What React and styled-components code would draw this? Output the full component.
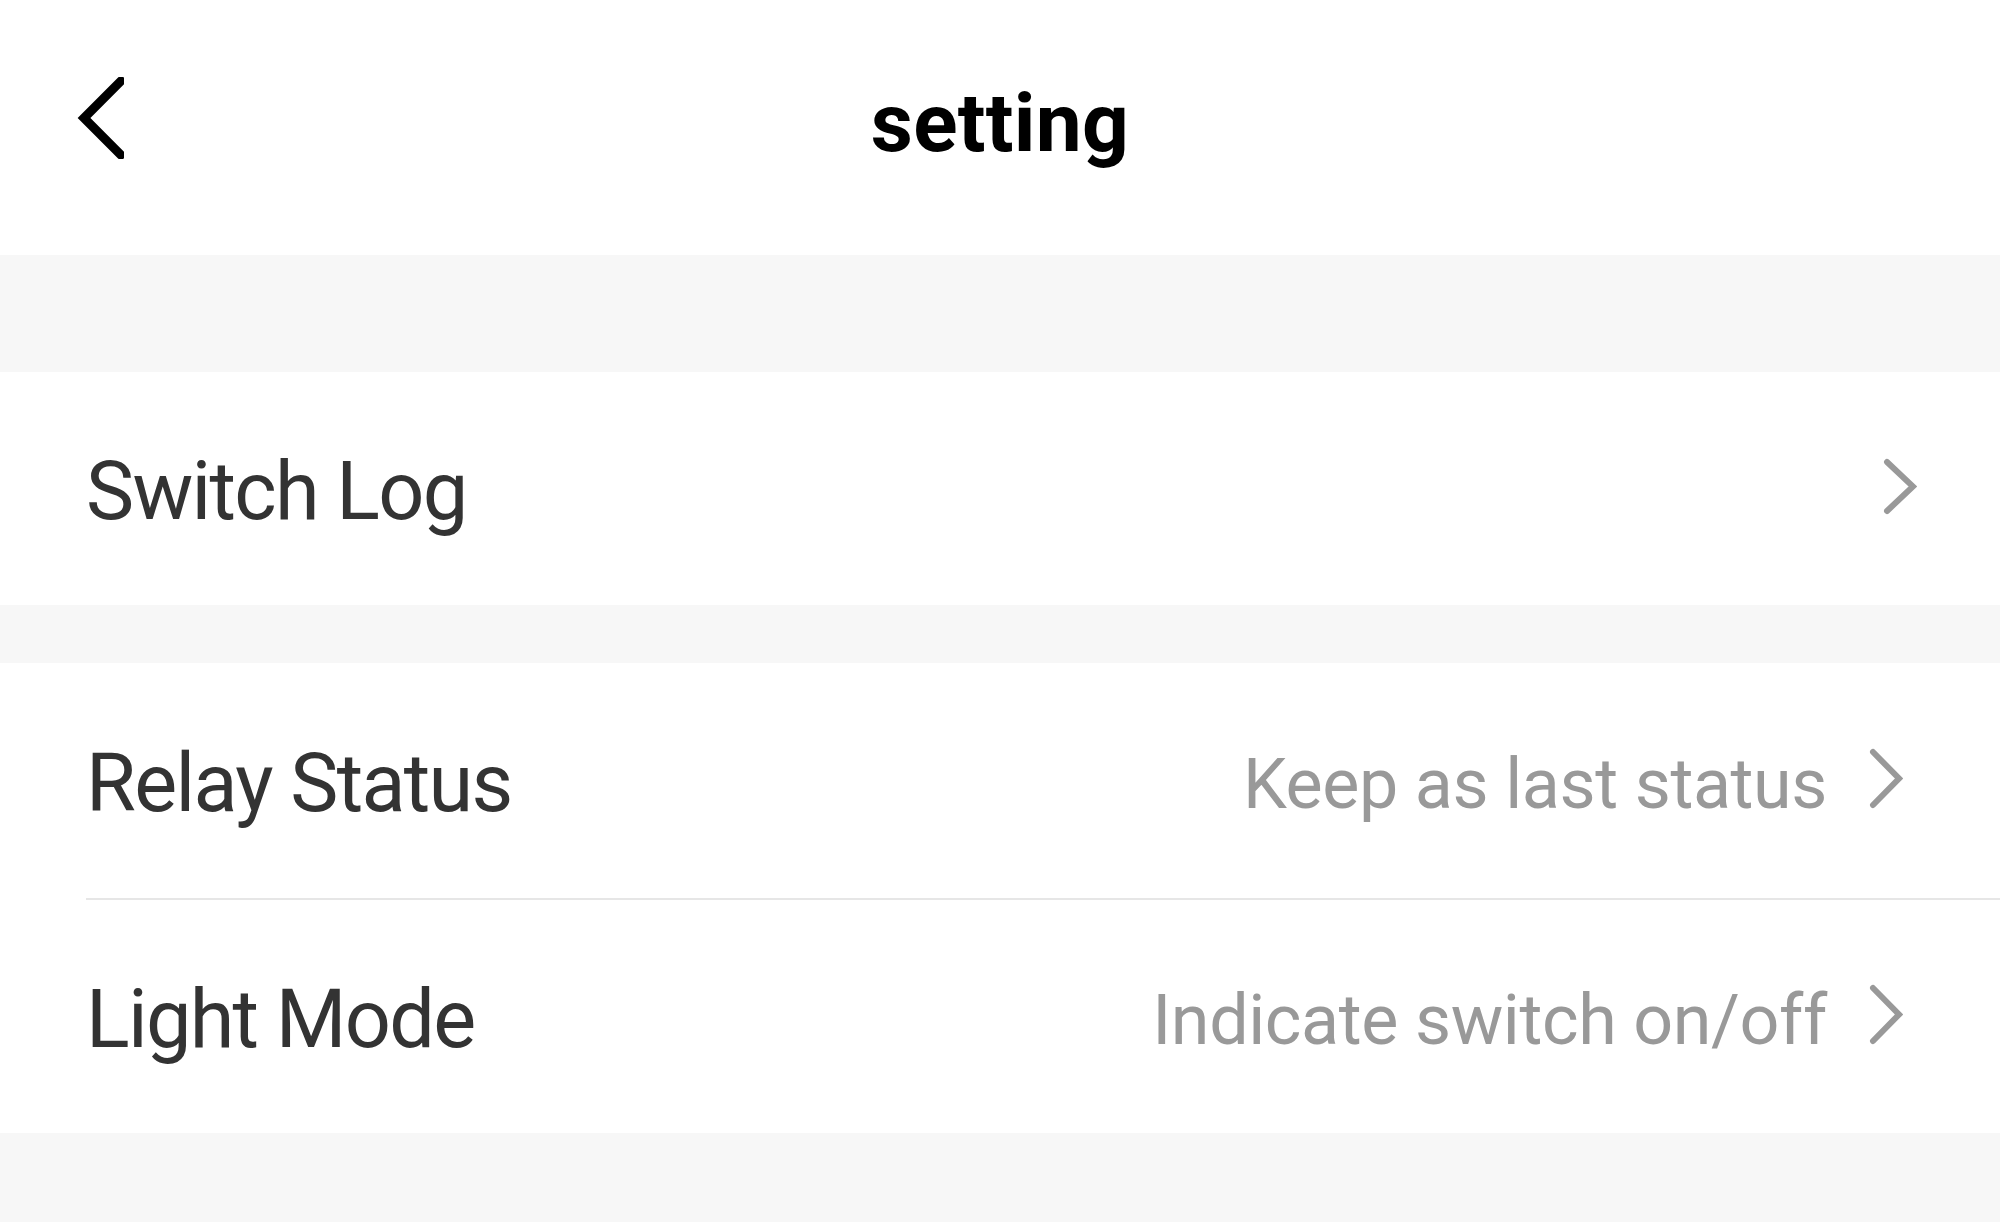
import React from "react";
import styled, {createGlobalStyle} from "styled-components";

const GlobalStyle = createGlobalStyle`
html, body {
  margin: 0;
  padding: 0;
  background: #f7f7f7;
  font-family: Roboto, "Liberation Sans", sans-serif;
}
`

const Page = styled.div`
min-height: 1222px;
display: flex;
flex-direction: column;
background: #f7f7f7;
`

const Header = styled.header`
height: 255px;
box-sizing: border-box;
padding-bottom: 10px;
display: grid;
grid-template-columns: 1fr auto 1fr;
align-items: center;
background: #fff;
`

const BackButton = styled.button`
justify-self: start;
margin-left: 76px;
margin-bottom: 10px;
padding: 0;
border: none;
background: none;
display: flex;
cursor: pointer;
`

const Title = styled.h1`
margin: 0;
font-size: 82px;
font-weight: 700;
color: #000;
letter-spacing: 0.3px;
`

const Spacer = styled.div`
height: ${p => p.size}px;
`

const Group = styled.section`
background: #fff;
`

const Row = styled.div`
height: ${p => p.h || 233}px;
box-sizing: border-box;
padding: 6px ${p => p.right || 97}px 0 86px;
display: flex;
align-items: center;
justify-content: space-between;
cursor: pointer;
`

const Divider = styled.div`
height: 2px;
margin-left: 86px;
background: #e6e6e6;
`

const Label = styled.span`
font-size: 81px;
color: #333;
letter-spacing: -1.7px;
`

const Trailing = styled.div`
display: flex;
align-items: center;
gap: 42px;
`

const Value = styled.span`
font-size: 70px;
color: #999;
letter-spacing: -0.4px;
`

const ChevronBox = styled.svg`
margin-bottom: 10px;
`

const BackIcon = () => (
  <svg width="48" height="82" viewBox="0 0 48 82">
    <polyline points="45,4 8,41 45,78" fill="none" stroke="#000" strokeWidth="9" strokeLinecap="round" strokeLinejoin="miter" />
  </svg>
)

const Chevron = ({w = 34, h = 61}) => (
  <ChevronBox width={w} height={h} viewBox={`0 0 ${w} ${h}`}>
    <polyline points={`4,4 ${w - 4},${h / 2} 4,${h - 4}`} fill="none" stroke="#999" strokeWidth="6" strokeLinecap="round" />
  </ChevronBox>
)

const App = () => {
  return (
    <Page>
      <GlobalStyle />
      <Header>
        <BackButton><BackIcon /></BackButton>
        <Title>setting</Title>
        <div />
      </Header>
      <Spacer size={117} />
      <Group>
        <Row h={233} right={83}>
          <Label>Switch Log</Label>
          <Chevron w={34} h={57} />
        </Row>
      </Group>
      <Spacer size={58} />
      <Group>
        <Row h={235}>
          <Label>Relay Status</Label>
          <Trailing>
            <Value>Keep as last status</Value>
            <Chevron />
          </Trailing>
        </Row>
        <Divider />
        <Row h={233}>
          <Label>Light Mode</Label>
          <Trailing>
            <Value>Indicate switch on/off</Value>
            <Chevron />
          </Trailing>
        </Row>
      </Group>
    </Page>
  )
}

export default App;
